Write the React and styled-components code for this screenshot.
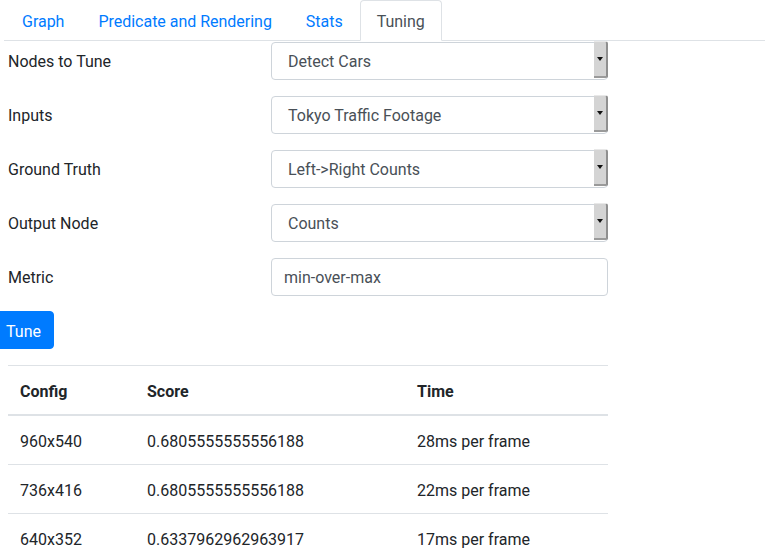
import React from "react";
import styled, { createGlobalStyle } from "styled-components";

const Global = createGlobalStyle`
  html, body { margin: 0; padding: 0; background: #fff; }
  body {
    font-family: Roboto, "Liberation Sans", Arial, sans-serif;
    font-size: 16px;
    line-height: 24px;
    color: #212529;
  }
  * { box-sizing: border-box; }
`;

const Page = styled.div`
  width: 765px;
  height: 557px;
  overflow: hidden;
`;

const Nav = styled.ul`
  display: flex;
  list-style: none;
  margin: 0 0 0 4px;
  padding: 0 0 0 1px;
  border-bottom: 1px solid #dee2e6;
`;

const Tab = styled.li`
  margin-bottom: -1px;
  padding: 9px 16px 6px;
  border: 1px solid ${(p) => (p.$active ? "#dee2e6" : "transparent")};
  border-bottom-color: ${(p) => (p.$active ? "#fff" : "transparent")};
  border-radius: 4px 4px 0 0;
  background: ${(p) => (p.$active ? "#fff" : "transparent")};
  color: ${(p) => (p.$active ? "#495057" : "#007bff")};
  white-space: nowrap;
  letter-spacing: -0.02px;
`;

const Form = styled.div`
  margin: 1px 0 0 8px;
  width: 600px;
`;

const Row = styled.div`
  display: grid;
  grid-template-columns: 1fr 337px;
  align-items: center;
  margin-bottom: 16px;
`;

const Label = styled.div`
  color: #212529;
  padding-top: 2px;
`;

const SelectBox = styled.div`
  display: flex;
  align-items: stretch;
  height: 38px;
  border: 1px solid #ced4da;
  border-radius: 4px;
  background: #fff;
  color: #495057;
`;

const SelectText = styled.div`
  flex: 1;
  padding: 7px 16px 5px;
  line-height: 24px;
`;

const DropButton = styled.div`
  width: 14px;
  margin: -2px -1px 1px 0;
  background: #d4d4d4;
  border-right: 2px solid #8f8f8f;
  border-bottom: 2px solid #9a9a9a;
  border-top: 1px solid #e8e8e8;
  border-radius: 0 3px 2px 0;
  display: flex;
  align-items: center;
  justify-content: center;
`;

const Arrow = styled.div`
  width: 0;
  height: 0;
  border-left: 3px solid transparent;
  border-right: 3px solid transparent;
  border-top: 4px solid #111;
`;

const TextInput = styled.div`
  height: 38px;
  border: 1px solid #ced4da;
  border-radius: 4px;
  padding: 7px 12px 5px;
  color: #495057;
`;

const Button = styled.button`
  display: block;
  margin: -1px 0 16px -7px;
  height: 38px;
  padding: 8px 12px 4px;
  border: 1px solid #007bff;
  border-radius: 4px;
  background: #007bff;
  color: #fff;
  font-family: inherit;
  font-size: 16px;
  line-height: 24px;
`;

const Table = styled.table`
  margin-left: 8px;
  width: 600px;
  border-collapse: collapse;
`;

const Th = styled.th`
  text-align: left;
  font-weight: 700;
  padding: 14px 12px 10px;
  border-top: 1px solid #dee2e6;
  border-bottom: 2px solid #dee2e6;
  width: ${(p) => p.$w}px;
`;

const Td = styled.td`
  padding: 14px 12px 10px;
  border-top: 1px solid #dee2e6;
`;

const selects = [
  ["Nodes to Tune", "Detect Cars"],
  ["Inputs", "Tokyo Traffic Footage"],
  ["Ground Truth", "Left->Right Counts"],
  ["Output Node", "Counts"],
];

const rows = [
  ["960x540", "0.6805555555556188", "28ms per frame"],
  ["736x416", "0.6805555555556188", "22ms per frame"],
  ["640x352", "0.6337962962963917", "17ms per frame"],
];

export default function App() {
  return (
    <Page>
      <Global />
      <Nav>
        <Tab>Graph</Tab>
        <Tab>Predicate and Rendering</Tab>
        <Tab>Stats</Tab>
        <Tab $active>Tuning</Tab>
      </Nav>
      <Form>
        {selects.map(([label, value]) => (
          <Row key={label}>
            <Label>{label}</Label>
            <SelectBox>
              <SelectText>{value}</SelectText>
              <DropButton>
                <Arrow />
              </DropButton>
            </SelectBox>
          </Row>
        ))}
        <Row>
          <Label>Metric</Label>
          <TextInput>min-over-max</TextInput>
        </Row>
      </Form>
      <Button>Tune</Button>
      <Table>
        <thead>
          <tr>
            <Th $w={127}>Config</Th>
            <Th $w={270}>Score</Th>
            <Th $w={203}>Time</Th>
          </tr>
        </thead>
        <tbody>
          {rows.map((r) => (
            <tr key={r[0]}>
              {r.map((c, i) => (
                <Td key={i}>{c}</Td>
              ))}
            </tr>
          ))}
        </tbody>
      </Table>
    </Page>
  );
}
